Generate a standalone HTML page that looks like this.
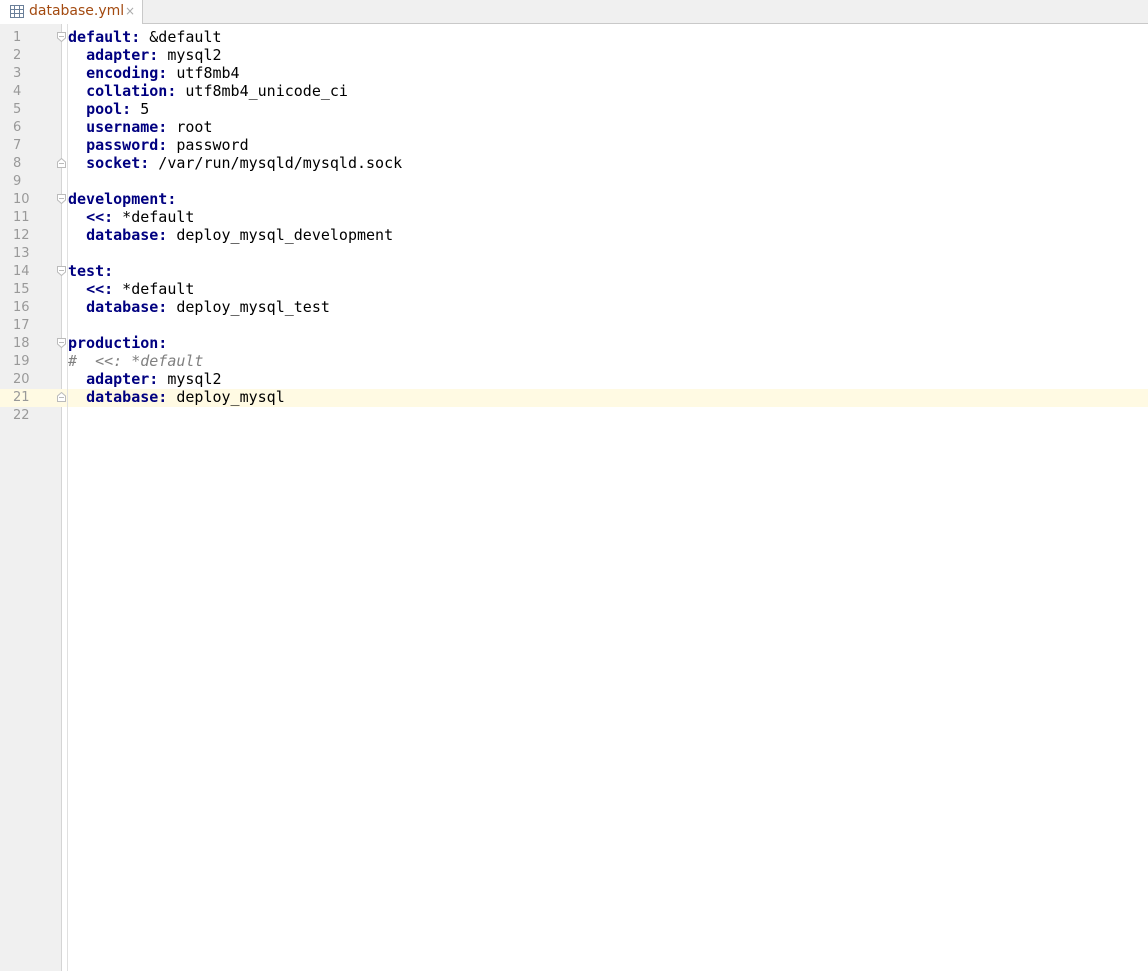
<!DOCTYPE html>
<html><head><meta charset="utf-8"><style>
body{margin:0;width:1148px;height:971px;overflow:hidden;background:#fff;position:relative;font-family:"DejaVu Sans Mono",monospace;}
.tabbar{position:absolute;left:0;top:0;width:1148px;height:23px;background:#f0f0f0;border-bottom:1px solid #c9c9c9;}
.tab{position:absolute;left:0;top:0;width:142px;height:24px;background:#fff;border-right:1px solid #c9c9c9;font-family:"DejaVu Sans",sans-serif;font-size:14px;color:#a34a10;}
.tab span{position:absolute;left:29px;top:3px;}
.tab .x{position:absolute;left:125px;top:4px;color:#aaa;font-size:12px}
.gut{position:absolute;left:0;top:24px;width:61px;height:947px;background:#f0f0f0;border-right:1px solid #d5d5d5;}
.gut2{position:absolute;left:67px;top:24px;width:1px;height:947px;background:#e0e0e0;}
.hl{position:absolute;left:0;top:389px;width:1148px;height:18px;background:#fffae3;}
.ln{position:absolute;left:13px;width:30px;font-size:13px;color:#999;font-family:"DejaVu Sans",sans-serif;}
.code{position:absolute;left:68px;top:28px;font-size:15px;line-height:18px;white-space:pre;color:#000;}
b{color:#000080;}
i{color:#808080;}
.f{position:absolute;left:57px;width:9px;height:10px;}
</style></head><body>
<div class="tabbar"></div>
<div class="tab"><svg style="position:absolute;left:10px;top:5px" width="14" height="13"><rect x="0.5" y="0.5" width="13" height="12" fill="#fff" stroke="#6a7f99"/><path d="M0 4.5H14M0 8.5H14M4.5 0V13M9.5 0V13" stroke="#6a7f99"/></svg><span>database.yml</span><span class="x">×</span></div>
<div class="gut"></div>
<div class="hl"></div>
<div class="gut2"></div>
<div class="ln" style="top:30px">1</div><div class="ln" style="top:48px">2</div><div class="ln" style="top:66px">3</div><div class="ln" style="top:84px">4</div><div class="ln" style="top:102px">5</div><div class="ln" style="top:120px">6</div><div class="ln" style="top:138px">7</div><div class="ln" style="top:156px">8</div><div class="ln" style="top:174px">9</div><div class="ln" style="top:192px">10</div><div class="ln" style="top:210px">11</div><div class="ln" style="top:228px">12</div><div class="ln" style="top:246px">13</div><div class="ln" style="top:264px">14</div><div class="ln" style="top:282px">15</div><div class="ln" style="top:300px">16</div><div class="ln" style="top:318px">17</div><div class="ln" style="top:336px">18</div><div class="ln" style="top:354px">19</div><div class="ln" style="top:372px">20</div><div class="ln" style="top:390px">21</div><div class="ln" style="top:408px">22</div>
<svg class="f" style="top:32px"><path d="M0.5 0.5H8.5V6L4.5 9.5L0.5 6Z" fill="#fff" stroke="#bbb"/><path d="M2 4.5H7" stroke="#bbb"/></svg>
<svg class="f" style="top:158px"><path d="M0.5 9.5H8.5V4L4.5 0.5L0.5 4Z" fill="#fff" stroke="#bbb"/><path d="M2 5.5H7" stroke="#bbb"/></svg>
<svg class="f" style="top:194px"><path d="M0.5 0.5H8.5V6L4.5 9.5L0.5 6Z" fill="#fff" stroke="#bbb"/><path d="M2 4.5H7" stroke="#bbb"/></svg>
<svg class="f" style="top:266px"><path d="M0.5 0.5H8.5V6L4.5 9.5L0.5 6Z" fill="#fff" stroke="#bbb"/><path d="M2 4.5H7" stroke="#bbb"/></svg>
<svg class="f" style="top:338px"><path d="M0.5 0.5H8.5V6L4.5 9.5L0.5 6Z" fill="#fff" stroke="#bbb"/><path d="M2 4.5H7" stroke="#bbb"/></svg>
<svg class="f" style="top:392px"><path d="M0.5 9.5H8.5V4L4.5 0.5L0.5 4Z" fill="#fff" stroke="#bbb"/><path d="M2 5.5H7" stroke="#bbb"/></svg>
<div class="code"><b>default:</b> &amp;default
  <b>adapter:</b> mysql2
  <b>encoding:</b> utf8mb4
  <b>collation:</b> utf8mb4_unicode_ci
  <b>pool:</b> 5
  <b>username:</b> root
  <b>password:</b> password
  <b>socket:</b> /var/run/mysqld/mysqld.sock

<b>development:</b>
  <b>&lt;&lt;:</b> *default
  <b>database:</b> deploy_mysql_development

<b>test:</b>
  <b>&lt;&lt;:</b> *default
  <b>database:</b> deploy_mysql_test

<b>production:</b>
<i>#  &lt;&lt;: *default</i>
  <b>adapter:</b> mysql2
  <b>database:</b> deploy_mysql
</div>
</body></html>
